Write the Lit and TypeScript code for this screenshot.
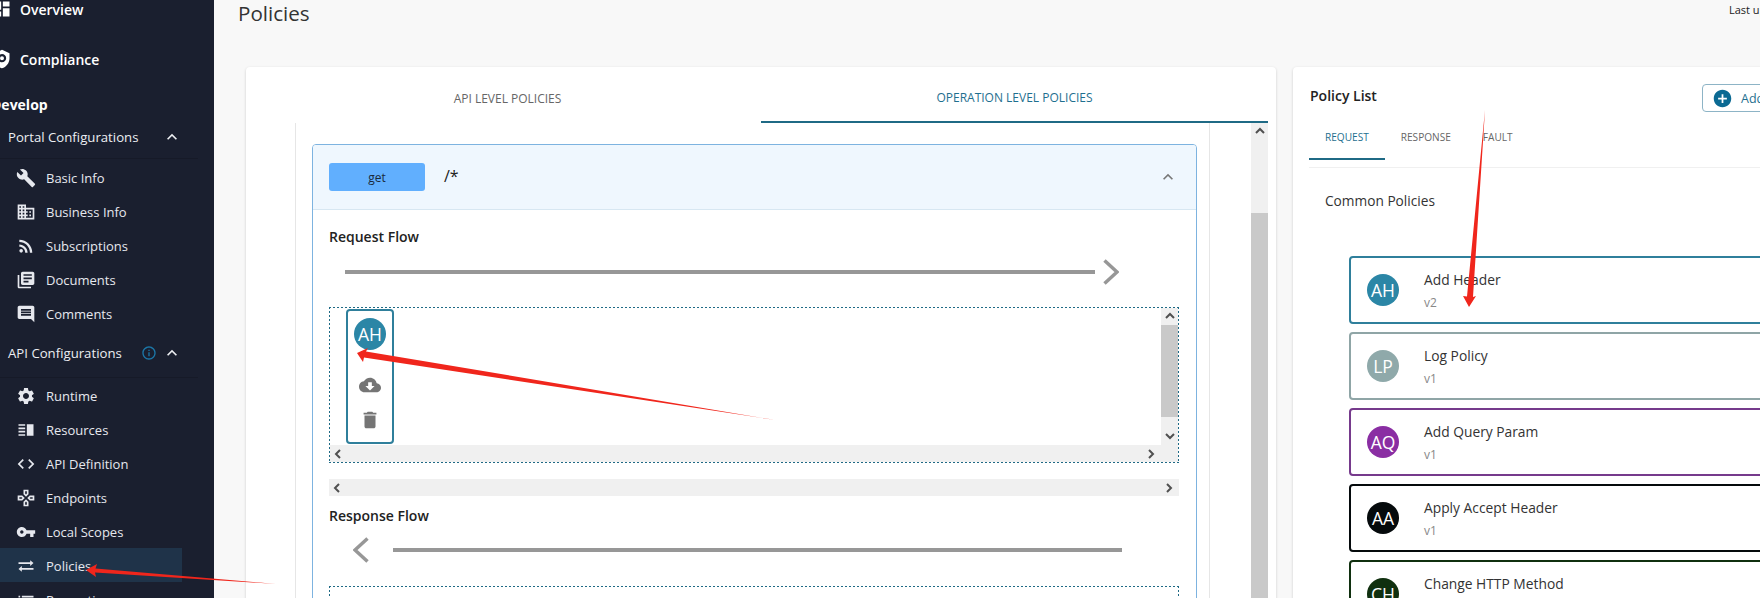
import { LitElement, html, css, svg } from "lit";
import { customElement } from "lit/decorators.js";

const P: Record<string, string> = {
  dashboard: "M3 13h8V3H3v10zm0 8h8v-6H3v6zm10 0h8V11h-8v10zm0-18v6h8V3h-8z",
  shield: "M12 1L3 5v6c0 5.55 3.84 10.74 9 12 5.16-1.26 9-6.45 9-12V5l-9-4zm0 5a5 5 0 1 1 0 10 5 5 0 0 1 0-10zm0 2.6a2.4 2.4 0 1 0 0 4.8 2.4 2.4 0 0 0 0-4.8z",
  build: "M22.7 19l-9.1-9.1c.9-2.3.4-5-1.5-6.9-2-2-5-2.4-7.4-1.3L9 6 6 9 1.6 4.7C.4 7.1.9 10.1 2.9 12.1c1.9 1.9 4.6 2.4 6.9 1.5l9.1 9.1c.4.4 1 .4 1.4 0l2.3-2.3c.5-.4.5-1.1.1-1.4z",
  business: "M12 7V3H2v18h20V7H12zM6 19H4v-2h2v2zm0-4H4v-2h2v2zm0-4H4V9h2v2zm0-4H4V5h2v2zm4 12H8v-2h2v2zm0-4H8v-2h2v2zm0-4H8V9h2v2zm0-4H8V5h2v2zm10 12h-8v-2h2v-2h-2v-2h2v-2h-2V9h8v10zm-2-8h-2v2h2v-2zm0 4h-2v2h2v-2z",
  rss: "M8.36 17.82a2.18 2.18 0 1 1-4.36 0 2.18 2.18 0 0 1 4.36 0zM4 4.44v2.83c7.03 0 12.73 5.7 12.73 12.73h2.83c0-8.59-6.97-15.56-15.56-15.56zm0 5.66v2.83c3.9 0 7.07 3.17 7.07 7.07h2.83c0-5.47-4.43-9.9-9.9-9.9z",
  books: "M4 6H2v14c0 1.1.9 2 2 2h14v-2H4V6zm16-4H8c-1.1 0-2 .9-2 2v12c0 1.1.9 2 2 2h12c1.1 0 2-.9 2-2V4c0-1.1-.9-2-2-2zm-1 9H9V9h10v2zm-4 4H9v-2h6v2zm4-8H9V5h10v2z",
  comment: "M21.99 4c0-1.1-.89-2-1.99-2H4c-1.1 0-2 .9-2 2v12c0 1.1.9 2 2 2h14l4 4-.01-18zM18 14H6v-2h12v2zm0-3H6V9h12v2zm0-3H6V6h12v2z",
  settings: "M19.14 12.94c.04-.3.06-.61.06-.94 0-.32-.02-.64-.07-.94l2.03-1.58c.18-.14.23-.41.12-.61l-1.92-3.32c-.12-.22-.37-.29-.59-.22l-2.39.96c-.5-.38-1.03-.7-1.62-.94l-.36-2.54c-.04-.24-.24-.41-.48-.41h-3.84c-.24 0-.43.17-.47.41l-.36 2.54c-.59.24-1.13.57-1.62.94l-2.39-.96c-.22-.08-.47 0-.59.22L2.74 8.87c-.12.21-.08.47.12.61l2.03 1.58c-.05.3-.09.63-.09.94s.02.64.07.94l-2.03 1.58c-.18.14-.23.41-.12.61l1.92 3.32c.12.22.37.29.59.22l2.39-.96c.5.38 1.03.7 1.62.94l.36 2.54c.05.24.24.41.48.41h3.84c.24 0 .44-.17.47-.41l.36-2.54c.59-.24 1.13-.56 1.62-.94l2.39.96c.22.08.47 0 .59-.22l1.92-3.32c.12-.22.07-.47-.12-.61l-2.01-1.58zM12 15.6c-1.98 0-3.6-1.62-3.6-3.6s1.62-3.6 3.6-3.6 3.6 1.62 3.6 3.6-1.62 3.6-3.6 3.6z",
  resources: "M3 15h8v-2H3v2zm0 4h8v-2H3v2zm0-8h8V9H3v2zm0-6v2h8V5H3zm10 0h8v14h-8V5z",
  code: "M9.4 16.6L4.8 12l4.6-4.6L8 6l-6 6 6 6 1.4-1.4zm5.2 0l4.6-4.6-4.6-4.6L16 6l6 6-6 6-1.4-1.4z",
  games: "M13 4v2.67l-1 1-1-1V4h2m7 7v2h-2.67l-1-1 1-1H20M6.67 11l1 1-1 1H4v-2h2.67M12 16.33l1 1V20h-2v-2.67l1-1M15 2H9v5.5l3 3 3-3V2zm7 7h-5.5l-3 3 3 3H22V9zM7.5 9H2v6h5.5l3-3-3-3zm4.5 4.5l-3 3V22h6v-5.5l-3-3z",
  key: "M12.65 10C11.83 7.67 9.61 6 7 6c-3.31 0-6 2.69-6 6s2.69 6 6 6c2.61 0 4.83-1.67 5.65-4H17v4h4v-4h2v-4H12.65zM7 14c-1.1 0-2-.9-2-2s.9-2 2-2 2 .9 2 2-.9 2-2 2z",
  swap: "M21 8.5l-4-3.5v2.5H3v2h14V12l4-3.5zM3 15.5L7 19v-2.5h14v-2H7V12l-4 3.5z",
  list: "M3 13h2v-2H3v2zm0 4h2v-2H3v2zm0-8h2V7H3v2zm4 4h14v-2H7v2zm0 4h14v-2H7v2zM7 7v2h14V7H7z",
  up: "M12 8l-6 6 1.41 1.41L12 10.83l4.59 4.58L18 14z",
  info: "M11 7h2v2h-2zm0 4h2v6h-2zm1-9C6.48 2 2 6.48 2 12s4.48 10 10 10 10-4.48 10-10S17.52 2 12 2zm0 18c-4.41 0-8-3.59-8-8s3.59-8 8-8 8 3.59 8 8-3.59 8-8 8z",
  cloud: "M19.35 10.04C18.67 6.59 15.64 4 12 4 9.11 4 6.6 5.64 5.35 8.04 2.34 8.36 0 10.91 0 14c0 3.31 2.69 6 6 6h13c2.76 0 5-2.24 5-5 0-2.64-2.05-4.78-4.65-4.96zM17 13l-5 5-5-5h3V9h4v4h3z",
  trash: "M6 19c0 1.1.9 2 2 2h8c1.1 0 2-.9 2-2V7H6v12zM19 4h-3.5l-1-1h-5l-1 1H5v2h14V4z",
  add: "M12 2C6.48 2 2 6.48 2 12s4.48 10 10 10 10-4.48 10-10S17.52 2 12 2zm5 11h-4v4h-2v-4H7v-2h4V7h2v4h4v2z",
};

const icon = (name: string, size: number, cls = "") =>
  html`<svg class="ic ${cls}" width=${size} height=${size} viewBox="0 0 24 24" fill="currentColor"><path d=${P[name]}></path></svg>`;

const sb = (dir: "u" | "d" | "l" | "r") => {
  const pts = { u: "1,6 5,2 9,6", d: "1,2 5,6 9,2", l: "6,1 2,5 6,9", r: "2,1 6,5 2,9" }[dir];
  return html`<svg class="sbi" width="10" height="10" viewBox="0 0 10 10"><polyline points=${pts} fill="none" stroke="#505050" stroke-width="2"></polyline></svg>`;
};

const portalItems = [["build", "Basic Info"], ["business", "Business Info"], ["rss", "Subscriptions"], ["books", "Documents"], ["comment", "Comments"]];
const apiItems = [["settings", "Runtime"], ["resources", "Resources"], ["code", "API Definition"], ["games", "Endpoints"], ["key", "Local Scopes"], ["swap", "Policies"], ["list", "Properties"]];
const policies = [
  { i: "AH", n: "Add Header", v: "v2", c: "#2b86a6", b: "#2f7f9b" },
  { i: "LP", n: "Log Policy", v: "v1", c: "#8fa9aa", b: "#8fa5a6" },
  { i: "AQ", n: "Add Query Param", v: "v1", c: "#8a2ea3", b: "#763a8c" },
  { i: "AA", n: "Apply Accept Header", v: "v1", c: "#050a0c", b: "#050a0c" },
  { i: "CH", n: "Change HTTP Method", v: "v1", c: "#10300f", b: "#10300f" },
];

@customElement("app-root")
export class AppRoot extends LitElement {
  static styles = css`
    :host { display: block; width: 1760px; height: 598px; overflow: hidden; position: relative; font-family: "Open Sans", "Noto Sans", sans-serif; color: #222; background: #f8f8f8; }
    .page { display: flex; width: 1760px; height: 598px; overflow: hidden; }
    .ic { display: block; flex: none; }
    .sbi { display: block; flex: none; }

    .side { width: 214px; flex: none; background: #1a1f2f; color: #fff; margin-top: -16px; font-size: 13.2px; }
    .top { height: 50px; display: flex; align-items: center; font-weight: 600; font-size: 14px; padding-left: 20px; position: relative; }
    .top .ic { margin-left: -28px; margin-right: 8px; }
    .dev { height: 26px; margin-top: 8px; line-height: 26px; font-weight: 700; font-size: 14px; margin-left: -9px; }
    .group { height: 43px; box-sizing: content-box; display: flex; align-items: center; padding: 0 0 3px 8px; margin-right: 16px; border-bottom: 1px solid #161a28; color: #eceef2; font-size: 13.2px; }
    .group.first { height: 37px; }
    .group .sp { flex: 1; }
    .group .chev { margin-right: 16px; }
    .group .inf { color: #1c77a8; margin-right: 5px; }
    .items { padding-top: 2px; }
    .items.api { padding-top: 1px; }
    .item { height: 34px; box-sizing: border-box; display: flex; align-items: center; padding-left: 16px; gap: 10px; width: 182px; color: #e6e8ee; font-size: 13px; }
    .item.on { background: #1f3349; margin: -1px 0 1px; padding-top: 2px; }

    .main { flex: 1; min-width: 0; display: flex; flex-direction: column; }
    .head { height: 67px; flex: none; display: flex; align-items: flex-start; padding-left: 24px; }
    .head h1 { margin: -1px 0 0; font-size: 20.6px; font-weight: 400; line-height: 28px; color: #333; flex: 1; }
    .last { width: 31px; flex: none; font-size: 11px; line-height: 20px; white-space: nowrap; color: #222; }
    .cards { display: flex; gap: 17px; padding-left: 32px; align-items: flex-start; }
    .card { background: #fff; border-radius: 4px; box-shadow: 0 1px 3px rgba(0,0,0,.18); height: 560px; flex: none; }

    .left { width: 1030px; padding: 0 8px; box-sizing: border-box; }
    .tabs { display: flex; height: 56px; }
    .tab { flex: 1; display: flex; align-items: center; justify-content: center; font-size: 12px; color: #666; padding-top: 6px; box-sizing: border-box; }
    .tab.on { color: #1f6f8f; border-bottom: 2px solid #1f6a85; }
    .body { display: flex; height: 500px; }
    .pane { margin-left: 41px; width: 915px; flex: none; box-sizing: border-box; padding: 21px 14px 0 16px; border-left: 1px solid #e6e6e6; border-right: 1px solid #e6e6e6; }
    .gap { flex: 1; }
    .vbar { width: 17px; flex: none; background: #f0f0f0; display: flex; flex-direction: column; }
    .vbar .btn { height: 17px; display: flex; align-items: center; justify-content: center; }
    .vbar .off { height: 73px; }
    .vbar .thumb { background: #c9c9c9; flex: 1; }

    .op { border: 1px solid #7db3e0; border-radius: 4px; width: 885px; box-sizing: border-box; height: 600px; }
    .ophead { height: 64px; background: #eff7fe; border-bottom: 1px solid #d7e7f2; display: flex; align-items: center; padding: 0 16px; border-radius: 3px 3px 0 0; }
    .get { width: 96px; height: 28px; background: #61affe; border-radius: 3px; display: flex; align-items: center; justify-content: center; font-size: 12px; color: #1a2a3a; }
    .path { margin-left: 19px; font-size: 16px; color: #222; flex: 1; margin-top: -2px; }
    .opchev { color: #777; margin-right: 2px; }
    .opbody { padding: 0 16px; }
    .flowt { font-size: 14px; font-weight: 600; color: #222; line-height: 20px; }
    .req { padding-top: 17px; }
    .arrow { display: flex; align-items: center; height: 26px; }
    .line { height: 4px; background: #979797; flex: none; }
    .req .arrow { margin: 12px 0 22px; padding-left: 16px; }
    .req .line { width: 750px; }
    .req .arrow svg { margin-left: 8px; }
    .dash {
      width: 850px; box-sizing: border-box; padding: 1px; display: grid; grid-template-columns: 1fr 17px; grid-template-rows: 1fr 17px; height: 156px;
      background-image:
        linear-gradient(to right, #1f6a85 50%, transparent 50%), linear-gradient(to right, #1f6a85 50%, transparent 50%),
        linear-gradient(to bottom, #1f6a85 50%, transparent 50%), linear-gradient(to bottom, #1f6a85 50%, transparent 50%);
      background-size: 4px 1px, 4px 1px, 1px 4px, 1px 4px;
      background-position: 0 0, 0 100%, 0 0, 100% 0;
      background-repeat: repeat-x, repeat-x, repeat-y, repeat-y;
    }
    .dash.open { height: 60px; grid-template-rows: 1fr; }
    .canvas { padding: 1px 0 0 16px; }
    .picked { width: 48px; height: 135px; box-sizing: border-box; border: 2px solid #2f7f9b; border-radius: 4px; display: flex; flex-direction: column; align-items: center; padding-top: 7px; color: #757575; background: #fff; }
    .av { width: 32px; height: 32px; border-radius: 50%; color: #fff; font-size: 17.5px; display: flex; align-items: center; justify-content: center; flex: none; }
    .picked .cl { margin-top: 24px; }
    .picked .tr { margin-top: 13px; }
    .dvbar { background: #f0f0f0; display: flex; flex-direction: column; align-items: center; }
    .dvbar .end { height: 17px; display: flex; align-items: center; justify-content: center; }
    .dvbar .t { height: 92px; align-self: stretch; background: #c9c9c9; }
    .dvbar .f { flex: 1; }
    .hbar { background: #f0f0f0; display: flex; align-items: center; justify-content: space-between; padding: 0 4px; height: 17px; box-sizing: border-box; }
    .corner { background: #f0f0f0; }
    .outer { width: 850px; margin-top: 16px; }
    .resp { margin-top: 10px; }
    .resp .arrow { margin: 11px 0 0; padding-left: 24px; }
    .resp .line { width: 729px; margin-left: 24px; }
    .resp .dash.open { margin-top: 23px; }
    .arrow polyline { stroke-width: 3.5; }

    .right { width: 480px; padding: 0 0 0 16px; box-sizing: border-box; }
    .rhead { display: flex; height: 49px; align-items: flex-start; }
    .rhead h2 { margin: 19px 0 0 1px; font-size: 14px; font-weight: 600; line-height: 20px; color: #222; flex: 1; }
    .addbtn { margin-top: 17px; margin-right: -49px; width: 120px; height: 28px; box-sizing: border-box; border: 1px solid #8db4c6; border-radius: 4px; display: flex; align-items: center; padding-left: 9px; gap: 8px; color: #1f6f8f; font-size: 12.5px; flex: none; white-space: nowrap; }
    .rtabs { display: flex; height: 44px; }
    .rt { font-size: 10.1px; color: #666; padding: 0 16px 2px; display: flex; align-items: center; height: 44px; box-sizing: border-box; }
    .rt.on { color: #1f6f8f; border-bottom: 2px solid #1f6a85; padding-bottom: 0; }
    .rdiv { border-top: 1px solid #f0f0f0; margin-top: 7px; }
    .common { font-size: 13.7px; color: #333; padding-left: 16px; margin-top: 23px; line-height: 20px; }
    .plist { margin: 45px 0 0 40px; }
    .pc { height: 68px; width: 460px; box-sizing: border-box; border: 2px solid; border-radius: 4px; margin-bottom: 8px; display: flex; align-items: center; padding-left: 16px; background: #fff; }
    .pc .txt { margin-left: 25px; }
    .pc .n { font-size: 13.8px; color: #333; line-height: 22px; }
    .pc .v { font-size: 12px; color: #888; line-height: 18px; margin-top: 3px; }

    .marks { position: absolute; left: 0; top: 0; width: 1760px; height: 598px; pointer-events: none; }
  `;

  private arrow(tip: string, tail: string) { return svg`<polygon points="${tip} ${tail}" fill="#f0261c"></polygon>`; }

  render() {
    return html`
      <div class="page">
        <nav class="side">
          <div class="top">${icon("dashboard", 20)}Overview</div>
          <div class="top">${icon("shield", 20)}Compliance</div>
          <div class="dev">Develop</div>
          <div class="group first"><span>Portal Configurations</span><span class="sp"></span><span class="chev">${icon("up", 20)}</span></div>
          <div class="items">${portalItems.map(([i, t]) => html`<div class="item">${icon(i, 20)}<span>${t}</span></div>`)}</div>
          <div class="group"><span>API Configurations</span><span class="sp"></span><span class="inf">${icon("info", 16)}</span><span class="chev">${icon("up", 20)}</span></div>
          <div class="items api">${apiItems.map(([i, t]) => html`<div class="item ${t === "Policies" ? "on" : ""}">${icon(i, 20)}<span>${t}</span></div>`)}</div>
        </nav>
        <main class="main">
          <div class="head"><h1>Policies</h1><div class="last">Last updated</div></div>
          <div class="cards">
            <section class="card left">
              <div class="tabs"><div class="tab">API LEVEL POLICIES</div><div class="tab on">OPERATION LEVEL POLICIES</div></div>
              <div class="body">
                <div class="pane">
                  <div class="op">
                    <div class="ophead"><div class="get">get</div><div class="path">/*</div><span class="opchev">${icon("up", 20)}</span></div>
                    <div class="opbody">
                      <div class="req">
                        <div class="flowt">Request Flow</div>
                        <div class="arrow"><div class="line"></div><svg width="16" height="26" viewBox="0 0 16 26"><polyline points="1.5,1.5 14,13 1.5,24.5" fill="none" stroke="#979797" stroke-width="3"></polyline></svg></div>
                        <div class="dash">
                          <div class="canvas"><div class="picked"><div class="av" style="background:#2b86a6">AH</div><span class="cl">${icon("cloud", 22)}</span><span class="tr">${icon("trash", 22)}</span></div></div>
                          <div class="dvbar"><div class="end">${sb("u")}</div><div class="t"></div><div class="f"></div><div class="end">${sb("d")}</div></div>
                          <div class="hbar">${sb("l")}${sb("r")}</div>
                          <div class="corner"></div>
                        </div>
                        <div class="hbar outer">${sb("l")}${sb("r")}</div>
                      </div>
                      <div class="resp">
                        <div class="flowt">Response Flow</div>
                        <div class="arrow"><svg width="16" height="26" viewBox="0 0 16 26"><polyline points="14.5,1.5 2,13 14.5,24.5" fill="none" stroke="#979797" stroke-width="3"></polyline></svg><div class="line"></div></div>
                        <div class="dash open"></div>
                      </div>
                    </div>
                  </div>
                </div>
                <div class="gap"></div>
                <div class="vbar"><div class="btn">${sb("u")}</div><div class="off"></div><div class="thumb"></div></div>
              </div>
            </section>
            <section class="card right">
              <div class="rhead"><h2>Policy List</h2><div class="addbtn"><span style="color:#0b6a93">${icon("add", 21)}</span><span>Add New Policy</span></div></div>
              <div class="rtabs"><div class="rt on">REQUEST</div><div class="rt">RESPONSE</div><div class="rt">FAULT</div></div>
              <div class="rdiv"></div>
              <div class="common">Common Policies</div>
              <div class="plist">
                ${policies.map((p) => html`<div class="pc" style="border-color:${p.b}"><div class="av" style="background:${p.c}">${p.i}</div><div class="txt"><div class="n">${p.n}</div><div class="v">${p.v}</div></div></div>`)}
              </div>
            </section>
          </div>
        </main>
      </div>
      <svg class="marks" viewBox="0 0 1760 598">
        ${this.arrow("86,570 97,564 95.5,568.5", "276,584 95,572.5 96,577")}
        ${this.arrow("357,353 368,348 366,351.5", "775,420 364,357.5 363,362")}
        ${this.arrow("1469,307 1463,296 1467,296.5", "1485,110 1473,297 1476,296")}
      </svg>
    `;
  }
}
